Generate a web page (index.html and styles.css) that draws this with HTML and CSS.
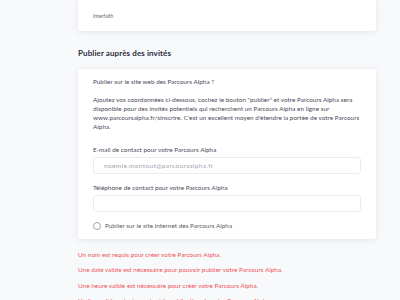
FILE: index.html
```html
<!DOCTYPE html>
<html lang="fr">
<head>
  <meta charset="UTF-8">
  <title>Parcours Alpha</title>
  <link rel="stylesheet" href="styles.css">
</head>
<body>
  <div class="page">
    <div class="card card-top">
      <p class="small">Interfaith</p>
    </div>

    <h2 class="section-title">Publier auprès des invités</h2>

    <div class="card card-publish">
      <p class="question">Publier sur le site web des Parcours Alpha ?</p>
      <p class="intro">Ajoutez vos coordonnées ci-dessous, cochez le bouton "publier" et votre Parcours Alpha sera disponible pour des invités potentiels qui recherchent un Parcours Alpha en ligne sur www.parcoursalpha.fr/sinscrire. C'est un excellent moyen d'étendre la portée de votre Parcours Alpha.</p>

      <label class="field-label" for="email">E-mail de contact pour votre Parcours Alpha</label>
      <input class="field" id="email" type="text" placeholder="noemie.montout@parcoursalpha.fr">

      <label class="field-label" for="phone">Téléphone de contact pour votre Parcours Alpha</label>
      <input class="field" id="phone" type="text">

      <label class="radio-row">
        <span class="radio"></span>
        Publier sur le site internet des Parcours Alpha
      </label>
    </div>

    <!-- erreurs de validation -->
    <div class="errors">
      <p>Un nom est requis pour créer votre Parcours Alpha.</p>
      <p>Une date valide est nécessaire pour pouvoir publier votre Parcours Alpha.</p>
      <p>Une heure valide est nécessaire pour créer votre Parcours Alpha.</p>
      <p>Un lieu valide est nécessaire à la publication de votre Parcours Alpha.</p>
    </div>
  </div>
</body>
</html>
```

FILE: styles.css
```css
body {
  margin: 0;
  background: #f8f9fb;
  font-family: 'Lato', 'Noto Sans', sans-serif;
  color: #4a4a58;
  overflow: hidden;
}

p {
  margin: 0;
}

.page {
  width: 298px;
  margin-left: 78px;
}

.card {
  background: #fff;
  border-radius: 3px;
  box-shadow: 0 1px 6px rgba(40, 50, 80, 0.10);
  padding: 0 15px;
}

.card-top {
  padding-top: 12px;
  padding-bottom: 10px;
  border-top-left-radius: 0;
  border-top-right-radius: 0;
}

.small {
  font-size: 5px;
  line-height: 9px;
  color: #666;
}

.section-title {
  margin: 17px 0 11px;
  font-size: 8px;
  line-height: 10px;
  font-weight: 700;
  letter-spacing: 0.1px;
  color: #2b2d3c;
}

.card-publish {
  padding-top: 8px;
  padding-bottom: 9px;
}

.question,
.intro,
.field-label,
.radio-row {
  font-size: 6.3px;
  line-height: 9px;
  letter-spacing: 0.05px;
}

.intro {
  margin-top: 8.5px;
}

.field-label {
  display: block;
  margin-top: 14px;
}

.field-label + .field {
  margin-top: 3.5px;
}

.field {
  display: block;
  box-sizing: border-box;
  width: 268px;
  height: 17px;
  padding: 0 10px;
  border: 1px solid #ececf0;
  border-radius: 3px;
  font-family: inherit;
  font-size: 6.5px;
  letter-spacing: 0.35px;
  background: #fff;
}

.field::placeholder {
  color: #a4a4ae;
}

.field + .field-label {
  margin-top: 8.5px;
}

.radio-row {
  display: flex;
  align-items: center;
  gap: 4px;
  margin-top: 9px;
  color: #5a5a66;
}

.radio {
  width: 6px;
  height: 6px;
  border: 1px solid #a4a4ae;
  border-radius: 50%;
}

.errors {
  margin-top: 10.5px;
}

.errors p {
  font-size: 6.3px;
  line-height: 9px;
  letter-spacing: 0.05px;
  color: #ee5257;
  margin-bottom: 6.5px;
}
```
